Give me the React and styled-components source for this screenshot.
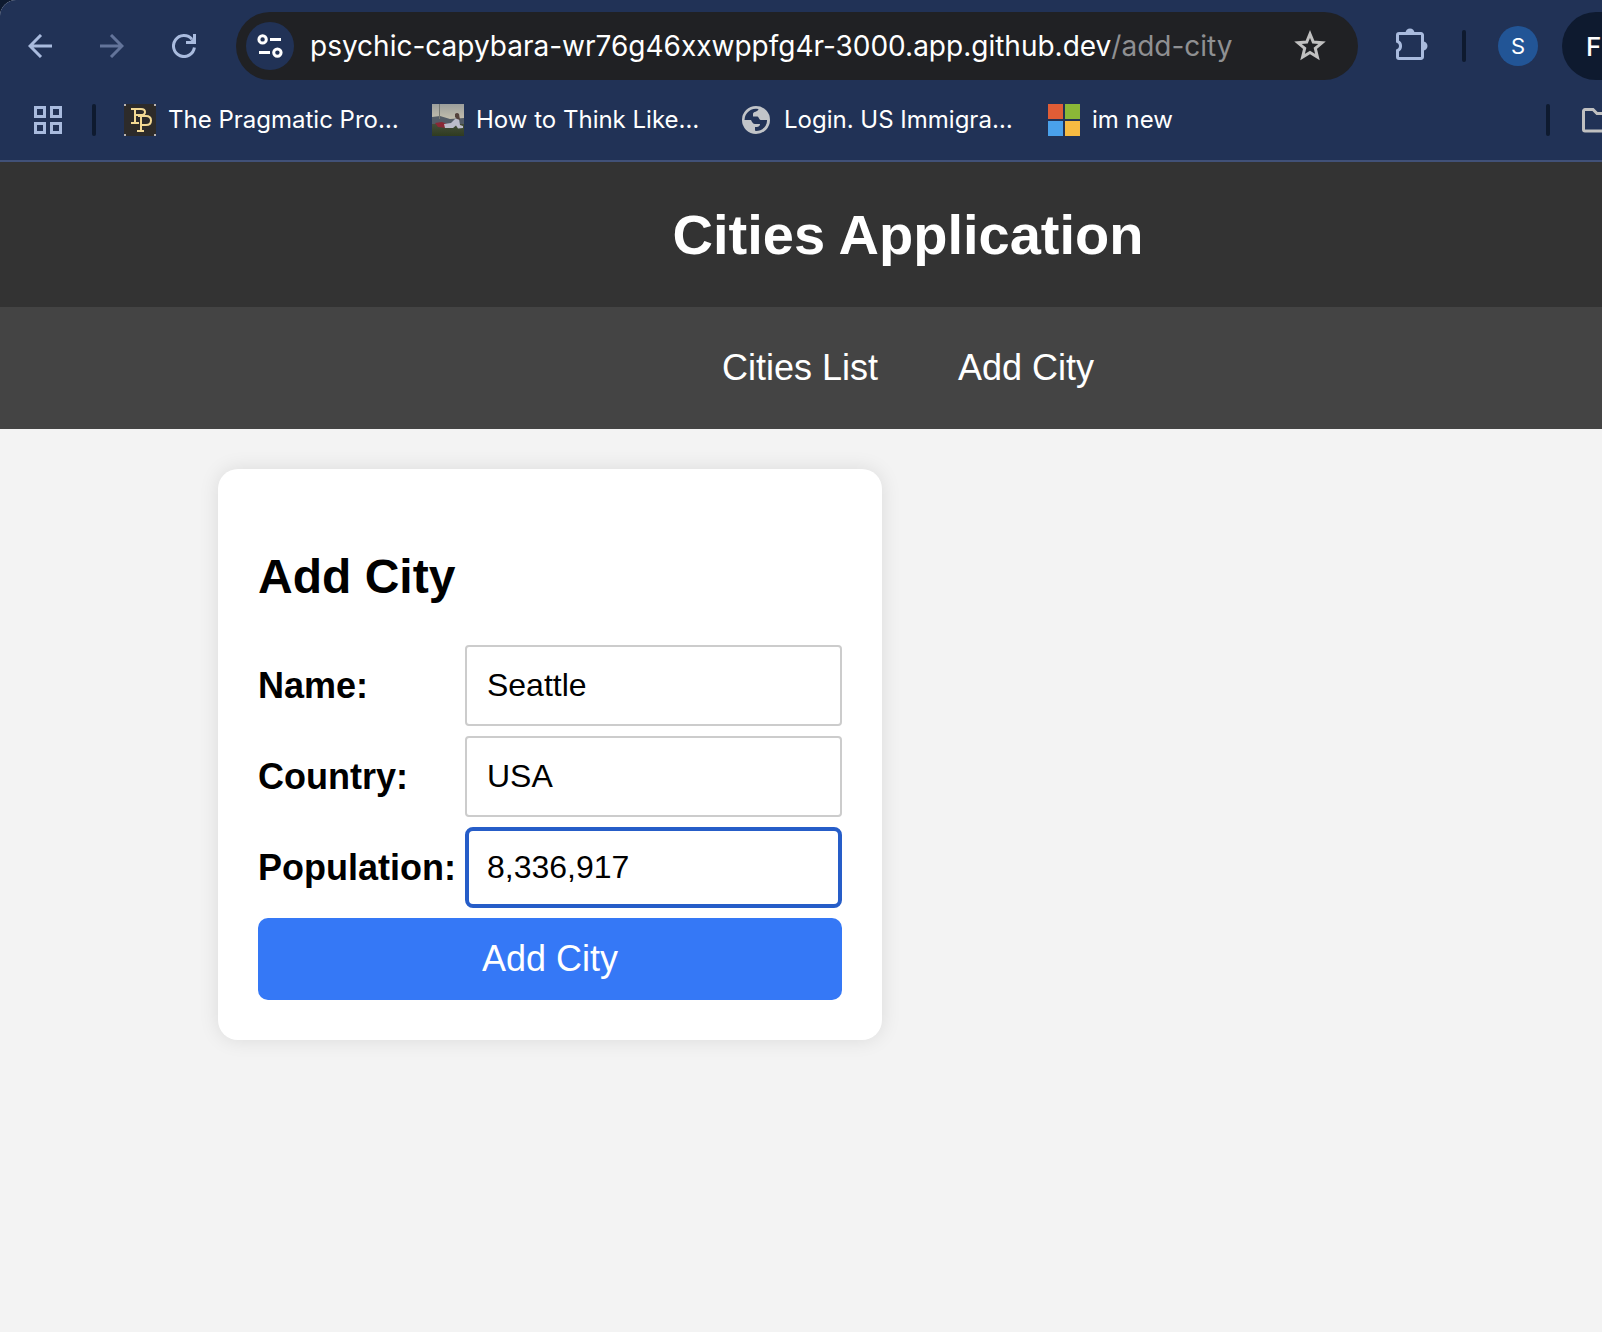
import React, { useState } from "react";
import styled, { createGlobalStyle, css } from "styled-components";

const ui = `Inter, Roboto, "Liberation Sans", sans-serif`;

const GlobalStyle = createGlobalStyle`
  *, *::before, *::after { box-sizing: border-box; }
  html { background: #0e1a2f; }
  body {
    margin: 0;
    overflow-x: hidden;
    font-family: "Liberation Sans", Arial, sans-serif;
    color: #000;
  }
`;

const Screen = styled.div`
  overflow: hidden;
`;

/* The browser window runs past the right edge of the screen. */
const Window = styled.div`
  width: calc(100% + 214px);
  min-height: 100vh;
  display: flex;
  flex-direction: column;
  background: #f3f3f3;
  border-top-left-radius: 16px;
  overflow: hidden;
`;

const Chrome = styled.div`
  background: #213256;
  border-bottom: 2px solid #415178;
  font-family: ${ui};
  color: #fff;
`;

const Toolbar = styled.div`
  display: flex;
  align-items: center;
  padding: 12px 14px 0 4px;
`;

const BookmarksBar = styled.div`
  display: flex;
  align-items: center;
  height: 80px;
  padding: 0 14px 0 12px;
`;

const bareButton = css`
  display: flex;
  align-items: center;
  justify-content: center;
  padding: 0;
  border: 0;
  background: none;
  color: ${(p) => p.$color || "#a9bbde"};
  font-family: ${ui};
  flex: none;
`;

const IconButton = styled.button`
  ${bareButton}
  width: 72px;
  height: 68px;
`;

const Omnibox = styled.div`
  flex: 1;
  min-width: 0;
  display: flex;
  align-items: center;
  height: 68px;
  margin: 0 18px 0 16px;
  padding: 0 12px 0 10px;
  border-radius: 34px;
  background: #202124;
`;

const SiteInfo = styled.button`
  ${bareButton}
  width: 48px;
  height: 48px;
  margin-right: 16px;
  border-radius: 24px;
  background: #213256;
`;

const UrlFields = styled.div`
  flex: 1;
  min-width: 0;
  display: flex;
`;

const UrlInput = styled.input`
  field-sizing: content;
  padding: 0;
  border: 0;
  outline: 0;
  background: none;
  color: ${(p) => (p.$dim ? "#8f9092" : "#fff")};
  font: 400 28px/34px ${ui};
`;

const Divider = styled.span`
  flex: none;
  width: 4px;
  height: 32px;
  margin: 0 ${(p) => p.$right}px 0 ${(p) => p.$left}px;
  border-radius: 2px;
  background: #0e1a2f;
`;

const Avatar = styled.button`
  ${bareButton}
  width: 40px;
  height: 40px;
  margin-right: 24px;
  border-radius: 20px;
  background: #225596;
  font-size: 22px;
`;

const UpdateButton = styled.button`
  ${bareButton}
  justify-content: flex-start;
  width: 240px;
  height: 68px;
  padding-left: 24px;
  border-radius: 34px;
  background: #0e1a2f;
  font-size: 26px;
  font-weight: 500;
`;

const Bookmark = styled.a`
  display: flex;
  align-items: center;
  gap: 12px;
  width: 308px;
  color: #fff;
  font-size: 24px;
  line-height: 32px;
  text-decoration: none;
  white-space: nowrap;
  svg { flex: none; }
`;

const Spacer = styled.div`
  flex: 1;
`;

const FolderButton = styled.button`
  ${bareButton}
  justify-content: flex-start;
  width: 220px;
  height: 40px;
`;

const Header = styled.header`
  background: #333;
  color: #fff;
  padding: 40px;
  text-align: center;
`;

const Title = styled.h1`
  margin: 0;
  font-size: 56px;
  line-height: 65px;
`;

const Nav = styled.nav`
  display: flex;
  justify-content: center;
  gap: 80px;
  padding: 40px;
  background: #444;
`;

const NavLink = styled.a`
  color: #fff;
  font-size: 36px;
  line-height: 42px;
  text-decoration: none;
`;

const Main = styled.main`
  width: 100%;
  max-width: 1380px;
  margin: 40px auto;
`;

const Card = styled.section`
  max-width: 664px;
  padding: 40px;
  border-radius: 20px;
  background: #fff;
  box-shadow: 0 0 20px rgba(0, 0, 0, 0.1);
`;

const CardTitle = styled.h2`
  margin: 40px 0;
  font-size: 48px;
  line-height: 56px;
`;

const Form = styled.form`
  display: grid;
  grid-template-columns: auto 1fr;
  align-items: center;
  gap: 10px 9px;
`;

const Label = styled.label`
  font-size: 36px;
  line-height: 42px;
  font-weight: 700;
`;

const Field = styled.input`
  min-width: 0;
  width: 100%;
  height: 81px;
  padding: 0 ${(p) => (p.$active ? 18 : 20)}px;
  border: ${(p) => (p.$active ? "4px solid #265dc8" : "2px solid #ccc")};
  border-radius: ${(p) => (p.$active ? 8 : 4)}px;
  outline: 0;
  background: #fff;
  color: #000;
  font: 32px "Liberation Sans", Arial, sans-serif;
`;

const Submit = styled.button`
  grid-column: 1 / -1;
  padding: 20px;
  border: 0;
  border-radius: 10px;
  background: #3578f6;
  color: #fff;
  font: 36px/42px "Liberation Sans", Arial, sans-serif;
`;

const stroke = { fill: "none", stroke: "currentColor", strokeWidth: 3 };

const BackIcon = () => (
  <svg width="24" height="24" viewBox="0 0 24 24" {...stroke}>
    <path d="M24 12H2M13 1L2 12l11 11" />
  </svg>
);
const ForwardIcon = () => (
  <svg width="24" height="24" viewBox="0 0 24 24" {...stroke}>
    <path d="M0 12h22M11 1l11 11-11 11" />
  </svg>
);
const ReloadIcon = () => (
  <svg width="24" height="24" viewBox="0 0 24 24" {...stroke}>
    <path d="M22.4 13.5A10.5 10.5 0 1 1 20 5.2" />
    <path d="M22.5 0v8.5H14" />
    <path d="M22.5 3v5.5H17z" fill="currentColor" stroke="none" />
  </svg>
);
const TuneIcon = () => (
  <svg width="26" height="26" viewBox="0 0 26 26" {...stroke}>
    <circle cx="5.6" cy="6.4" r="3.7" />
    <path d="M13 6.5h11M2 19.5h11" />
    <circle cx="20.4" cy="19.6" r="3.7" />
  </svg>
);
const StarIcon = () => (
  <svg width="32" height="32" viewBox="0 0 32 32" {...stroke}>
    <path d="M16 4l3.3 8.1 8.7.7-6.7 5.6 2.1 8.6L16 22.4 8.6 27l2.1-8.6L4 12.8l8.7-.7z" />
  </svg>
);
const PuzzleIcon = () => (
  <svg width="32" height="36" viewBox="0 0 32 36" {...stroke}>
    <path d="M3 5.5h22a1.500 1.500 0 0 1 1.500 1.500v22a1.500 1.500 0 0 1-1.500 1.500H3A1.500 1.500 0 0 1 1.500 29v-6.400a5 5 0 0 0 0-9.200V7A1.500 1.500 0 0 1 3 5.500z" />
    <path d="M9.500 5a4.500 4.500 0 0 1 9 0zM27 13.500a4.500 4.500 0 0 1 0 9z" fill="currentColor" stroke="none" />
  </svg>
);
const AppsIcon = () => (
  <svg width="28" height="28" viewBox="0 0 28 28" {...stroke}>
    <path d="M1.5 1.5h9v9h-9zM17.5 1.5h9v9h-9zM1.5 17.5h9v9h-9zM17.5 17.5h9v9h-9z" />
  </svg>
);
const FolderIcon = () => (
  <svg width="32" height="26" viewBox="0 0 32 26" {...stroke}>
    <path d="M3 2.5h8l4 4h14a1.5 1.5 0 0 1 1.5 1.5v14.5A1.5 1.5 0 0 1 29 24H3a1.5 1.5 0 0 1-1.5-1.5V4A1.5 1.5 0 0 1 3 2.5z" />
  </svg>
);
const PragmaticIcon = () => (
  <svg width="32" height="32" viewBox="0 0 32 32">
    <path d="M0 0h32v32H0z" fill="#2d2b2a" />
    <path d="M0 0h2v2H0zM30 0h2v2h-2zM0 30h2v2H0zM30 30h2v2h-2z" fill="#b9b4b0" />
    <g fill="none" stroke="#f3d993" strokeWidth="2">
      <path d="M7 5h10q4 0 4 3t-4 3H12M11 5v14M7 19h8" />
      <path d="M14 12h8q5 0 5 4.500t-5 4.500h-4M17 12v15M13 27h7" />
    </g>
  </svg>
);
const PhotoIcon = () => (
  <svg width="32" height="32" viewBox="0 0 32 32">
    <defs>
      <linearGradient id="sky" x1="0" y1="0" x2="0" y2="1">
        <stop offset="0" stopColor="#9c9f9c" />
        <stop offset="1" stopColor="#c4bfae" />
      </linearGradient>
      <linearGradient id="grass" x1="0" y1="0" x2="0" y2="1">
        <stop offset="0" stopColor="#444d3a" />
        <stop offset="1" stopColor="#2f3b20" />
      </linearGradient>
    </defs>
    <path d="M0 0h32v16H0z" fill="url(#sky)" />
    <path d="M0 13l8-1 10 3 14-1v7H0z" fill="#535b66" />
    <path d="M0 20h32v12H0z" fill="url(#grass)" />
    <path d="M7 0h1v15H7z" fill="#777973" />
    <path d="M3 19l7-1 5 2v4l-9-1z" fill="#8a2836" />
    <path d="M12 20l7-1 4-4h4l1 6 3 1v2l-5 .5-2-3-3 2.500h-8z" fill="#bcbccb" />
    <path d="M23 10q2-2 4 0l1 6-3-1-2-2z" fill="#54423c" />
  </svg>
);
const GlobeIcon = () => (
  <svg width="32" height="32" viewBox="0 0 32 32">
    <circle cx="16" cy="16" r="14" fill="#c1c4c8" />
    <path
      d="M18.500 5C18 8 13 7.500 13 10v2.500h4.500c1 0 1.500 3 3 3.500h6.500C27.500 22 22 27 16 27l-1-.5V23c3 0 5-.5 5-3h-5c-2 0-3-2-4-4H4.500A11.500 11.500 0 0 1 18.500 5z"
      fill="#213256"
    />
  </svg>
);
const WindowsIcon = () => (
  <svg width="32" height="32" viewBox="0 0 32 32">
    <path d="M0 0h15v15H0z" fill="#e05d36" />
    <path d="M17 0h15v15H17z" fill="#8bb837" />
    <path d="M0 17h15v15H0z" fill="#4aa1eb" />
    <path d="M17 17h15v15H17z" fill="#f7bb42" />
  </svg>
);

const bookmarks = [
  { text: "The Pragmatic Pro…", Icon: PragmaticIcon },
  { text: "How to Think Like…", Icon: PhotoIcon },
  { text: "Login. US Immigra…", Icon: GlobeIcon },
  { text: "im new", Icon: WindowsIcon },
];

const fields = [
  { id: "name", label: "Name:" },
  { id: "country", label: "Country:" },
  { id: "population", label: "Population:" },
];

export default function App() {
  const [city, setCity] = useState({
    name: "Seattle",
    country: "USA",
    population: "8,336,917",
  });
  const [active, setActive] = useState("population");

  return (
    <Screen>
      <GlobalStyle />
      <Window>
        <Chrome>
          <Toolbar>
            <IconButton aria-label="Back"><BackIcon /></IconButton>
            <IconButton aria-label="Forward" $color="#63749a"><ForwardIcon /></IconButton>
            <IconButton aria-label="Reload"><ReloadIcon /></IconButton>
            <Omnibox>
              <SiteInfo aria-label="Site information" $color="#fff"><TuneIcon /></SiteInfo>
              <UrlFields>
                <UrlInput
                  aria-label="Host"
                  defaultValue="psychic-capybara-wr76g46xxwppfg4r-3000.app.github.dev"
                />
                <UrlInput $dim aria-label="Path" defaultValue="/add-city" />
              </UrlFields>
              <IconButton aria-label="Bookmark this page" $color="#c0c0c0"><StarIcon /></IconButton>
            </Omnibox>
            <IconButton aria-label="Extensions"><PuzzleIcon /></IconButton>
            <Divider $left={14} $right={32} />
            <Avatar aria-label="Profile S" $color="#fff">S</Avatar>
            <UpdateButton $color="#fff">F</UpdateButton>
          </Toolbar>
          <BookmarksBar>
            <IconButton aria-label="Apps"><AppsIcon /></IconButton>
            <Divider $left={8} $right={28} />
            {bookmarks.map(({ text, Icon }) => (
              <Bookmark key={text} href="#"><Icon />{text}</Bookmark>
            ))}
            <Spacer />
            <Divider $left={0} $right={32} />
            <FolderButton aria-label="All bookmarks" $color="#c0c0c0"><FolderIcon /></FolderButton>
          </BookmarksBar>
        </Chrome>
        <Header>
          <Title>Cities Application</Title>
        </Header>
        <Nav>
          <NavLink href="#">Cities List</NavLink>
          <NavLink href="#">Add City</NavLink>
        </Nav>
        <Main>
          <Card>
            <CardTitle>Add City</CardTitle>
            <Form onSubmit={(e) => e.preventDefault()}>
              {fields.map(({ id, label }) => (
                <React.Fragment key={id}>
                  <Label htmlFor={id}>{label}</Label>
                  <Field
                    id={id}
                    value={city[id]}
                    $active={active === id}
                    onFocus={() => setActive(id)}
                    onChange={(e) => setCity({ ...city, [id]: e.target.value })}
                  />
                </React.Fragment>
              ))}
              <Submit type="submit">Add City</Submit>
            </Form>
          </Card>
        </Main>
      </Window>
    </Screen>
  );
}
